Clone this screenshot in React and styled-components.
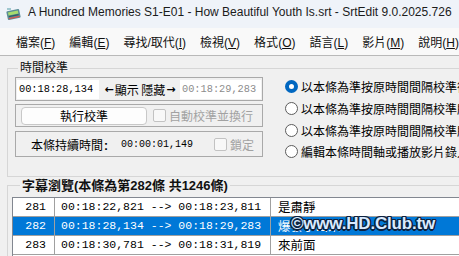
import React from 'react';
import styled, { createGlobalStyle } from 'styled-components';

const GlobalStyle = createGlobalStyle`
  html, body {
    margin: 0;
    padding: 0;
    width: 459px;
    height: 256px;
    overflow: hidden;
    background: #f0f0f0;
  }
  body {
    font-family: "Liberation Sans", "Noto Sans CJK TC", sans-serif;
    font-size: 12px;
    color: #000;
  }
`;

const CJK = `"Liberation Sans", "Noto Sans CJK TC", sans-serif`;
const MONO = `"Liberation Mono", "Noto Sans CJK TC", monospace`;

const Window = styled.div`
  width: 459px;
  height: 256px;
  overflow: hidden;
  white-space: nowrap;
`;

const TitleBar = styled.div`
  height: 28px;
  display: flex;
  align-items: center;
  padding-left: 6px;
  gap: 7px;
  background: #eff3f9;
  box-sizing: border-box;
`;

const Title = styled.span`
  font-family: "Liberation Sans", sans-serif;
  font-size: 12px;
  color: #1b1b1b;
  margin-top: -4px;
`;

const MenuBar = styled.div`
  height: 27px;
  display: flex;
  align-items: center;
  background: #f9f9f9;
  border-bottom: 1px solid #b9b9b9;
  padding-left: 4px;
`;

const Grip = styled.div`
  width: 2px;
  height: 16px;
  margin-right: 12px;
  background: repeating-linear-gradient(to bottom, #a3a3a3 0 2px, transparent 2px 4px);
`;

const MenuItem = styled.span`
  font-family: ${CJK};
  font-size: 12px;
  margin-right: 14px;
  color: #111;
`;

const Key = styled.span`
  text-decoration: underline;
  text-underline-offset: 1px;
`;

const Body = styled.div`
  padding: 5px 0 0 7px;
`;

const Group = styled.fieldset`
  margin: ${p => (p.$gap ? '1px 0 0 0' : '0')};
  padding: ${p => p.$pad};
  border: 1px solid #d6d6d6;
  border-right: none;
  min-width: 0;
`;

const Legend = styled.legend`
  font-family: ${CJK};
  font-size: ${p => (p.$bold ? '13px' : '12px')};
  font-weight: ${p => (p.$bold ? 700 : 400)};
  line-height: ${p => (p.$bold ? '16px' : '14px')};
  padding: 0 2px;
  margin-left: ${p => p.$offset}px;
  color: #111;
`;

const SyncPanel = styled.div`
  display: flex;
  gap: 22px;
  align-items: flex-start;
`;

const LeftCol = styled.div`
  display: flex;
  flex-direction: column;
  flex: none;
  width: 248px;
`;

const Frame = styled.div`
  box-sizing: border-box;
  height: ${p => p.$h}px;
  margin-top: ${p => p.$mt || 0}px;
  border: 1px solid #a9a9a9;
  display: flex;
  align-items: center;
  padding: 0 1px;
`;

const TimeBox = styled.div`
  box-sizing: border-box;
  flex: none;
  width: ${p => p.$w}px;
  height: 19px;
  background: #fff;
  display: flex;
  align-items: center;
  padding-left: 2px;
  font-family: ${MONO};
  font-size: 10.3px;
  color: ${p => (p.$dim ? '#8c8c8c' : '#000')};
`;

const ArrowLabel = styled.span`
  font-family: "Noto Sans CJK TC", sans-serif;
  font-size: 12px;
  margin: 0 2px 0 3px;
  flex: 1;
  display: flex;
  align-items: center;
  justify-content: center;
`;

const Arrow = styled.span`
  font-family: "DejaVu Sans", sans-serif;
  font-size: 11px;
  font-weight: 700;
  margin: ${p => (p.$left ? '0 0 0 1px' : '0 1px 0 0')};
`;

const Button = styled.div`
  box-sizing: border-box;
  width: 126px;
  height: 18px;
  margin-left: 4px;
  border: 1px solid #c8c8c8;
  border-radius: 4px;
  background: #fdfdfd;
  display: flex;
  align-items: center;
  justify-content: center;
  font-family: ${CJK};
  font-size: 12px;
`;

const Check = styled.span`
  box-sizing: border-box;
  width: 13px;
  height: 13px;
  margin-left: ${p => p.$ml}px;
  border: 1px solid #c2c2c2;
  border-radius: 2px;
  background: #f8f8f8;
`;

const CheckLabel = styled.span`
  font-family: ${CJK};
  font-size: 12px;
  color: #a2a2a2;
  margin-left: 3px;
`;

const DurLabel = styled.span`
  font-family: ${CJK};
  font-size: 12px;
  margin-left: 14px;
`;

const Colon = styled.b`
  margin-left: 1px;
`;

const DurValue = styled.span`
  font-family: ${MONO};
  font-size: 10px;
  margin-left: 13px;
`;

const RadioCol = styled.div`
  display: grid;
  grid-auto-rows: 21.7px;
  margin-top: -1px;
`;

const RadioRow = styled.div`
  display: flex;
  align-items: center;
  gap: 3px;
  font-family: ${CJK};
  font-size: 12px;
`;

const Radio = styled.span`
  box-sizing: border-box;
  width: 13px;
  height: 13px;
  border-radius: 50%;
  flex: none;
  border: ${p => (p.$on ? '4px solid #0067c0' : '1px solid #5c5c5c')};
  background: #fff;
`;

const List = styled.div`
  position: relative;
  border: 1px solid #828790;
  border-right: none;
  background: #fff;
  height: 80px;
`;

const Row = styled.div`
  display: grid;
  grid-template-columns: 42px 216px 1fr;
  height: 18px;
  border-bottom: 1px solid #a0a0a0;
  background: ${p => (p.$selected ? '#0078d7' : '#fff')};
  color: ${p => (p.$selected ? '#fff' : '#000')};
`;

const Cell = styled.div`
  display: flex;
  align-items: center;
  justify-content: ${p => (p.$right ? 'flex-end' : 'flex-start')};
  padding: ${p => p.$pad};
  border-right: ${p => (p.$divider ? '1px solid #a0a0a0' : 'none')};
  font-family: ${p => (p.$cjk ? CJK : MONO)};
  font-size: ${p => (p.$cjk ? '12.5px' : '11.5px')};
  overflow: hidden;
`;

const Watermark = styled.div`
  position: absolute;
  left: 278px;
  top: 16px;
  font-family: "Liberation Sans", sans-serif;
  font-size: 17px;
  font-weight: 700;
  letter-spacing: -0.2px;
  color: #d9ebff;
  text-shadow:
    -1.5px 0 0 #0d2240, 1.5px 0 0 #0d2240, 0 -1.5px 0 #0d2240, 0 1.5px 0 #0d2240,
    -1px -1px 0 #0d2240, 1px -1px 0 #0d2240, -1px 1px 0 #0d2240, 1px 1px 0 #0d2240;
`;

const AppIcon = () => (
  <svg width="15" height="15" viewBox="0 0 15 15">
    <g transform="rotate(-12 7.5 7.5)">
      <rect x="1" y="3" width="13" height="9" rx="1" fill="#5b8d96" />
      <rect x="2.5" y="4.5" width="10" height="3" fill="#a7dc6e" />
      <rect x="2.5" y="8" width="10" height="1.3" fill="#2f5d66" />
      <rect x="2" y="10" width="11" height="1.2" fill="#d9534f" />
    </g>
    <rect x="1" y="1" width="4" height="2" fill="#9fc7cf" />
  </svg>
);

const menus = [
  ['檔案', 'F'], ['編輯', 'E'], ['尋找/取代', 'I'], ['檢視', 'V'],
  ['格式', 'O'], ['語言', 'L'], ['影片', 'M'], ['說明', 'H'],
];

const radios = [
  '以本條為準按原時間間隔校準後面所有條',
  '以本條為準按原時間間隔校準所有條目',
  '以本條為準按原時間間隔校準所選條目',
  '編輯本條時間軸或播放影片錄入時間',
];

const rows = [
  { id: 281, start: '00:18:22,821', end: '00:18:23,811', text: '是肅靜' },
  { id: 282, start: '00:18:28,134', end: '00:18:29,283', text: '爆發了出來', selected: true },
  { id: 283, start: '00:18:30,781', end: '00:18:31,819', text: '來前面' },
];

export default function App() {
  return (
    <Window>
      <GlobalStyle />
      <TitleBar>
        <AppIcon />
        <Title>A Hundred Memories S1-E01 - How Beautiful Youth Is.srt - SrtEdit 9.0.2025.726</Title>
      </TitleBar>
      <MenuBar>
        <Grip />
        {menus.map(([label, key]) => (
          <MenuItem key={key}>{label}(<Key>{key}</Key>)</MenuItem>
        ))}
      </MenuBar>
      <Body>
        <Group $pad="2px 0 13px 7px">
          <Legend $offset={3}>時間校準</Legend>
          <SyncPanel>
            <LeftCol>
              <Frame $h={24}>
                <TimeBox $w={82}>00:18:28,134</TimeBox>
                <ArrowLabel><Arrow>←</Arrow>顯示&nbsp;隱藏<Arrow $left>→</Arrow></ArrowLabel>
                <TimeBox $w={81} $dim>00:18:29,283</TimeBox>
              </Frame>
              <Frame $h={23} $mt={3}>
                <Button>執行校準</Button>
                <Check $ml={6} />
                <CheckLabel>自動校準並換行</CheckLabel>
              </Frame>
              <Frame $h={26} $mt={4}>
                <DurLabel>本條持續時間<Colon>:</Colon></DurLabel>
                <DurValue>00:00:01,149</DurValue>
                <Check $ml={21} />
                <CheckLabel>鎖定</CheckLabel>
              </Frame>
            </LeftCol>
            <RadioCol>
              {radios.map((r, i) => (
                <RadioRow key={i}>
                  <Radio $on={i === 0} />
                  {r}
                </RadioRow>
              ))}
            </RadioCol>
          </SyncPanel>
        </Group>
        <Group $gap $pad="3px 0 0 4px">
          <Legend $bold $offset={8}>字幕瀏覽(本條為第282條 共1246條)</Legend>
          <List>
            {rows.map(r => (
              <Row key={r.id} $selected={r.selected}>
                <Cell $right $divider $pad="0 8px 0 0">{r.id}</Cell>
                <Cell $divider $pad="0 0 0 6px">{r.start} --&gt; {r.end}</Cell>
                <Cell $cjk $pad="0 0 0 7px">{r.text}</Cell>
              </Row>
            ))}
            <Watermark>©www.HD.Club.tw</Watermark>
          </List>
        </Group>
      </Body>
    </Window>
  );
}
